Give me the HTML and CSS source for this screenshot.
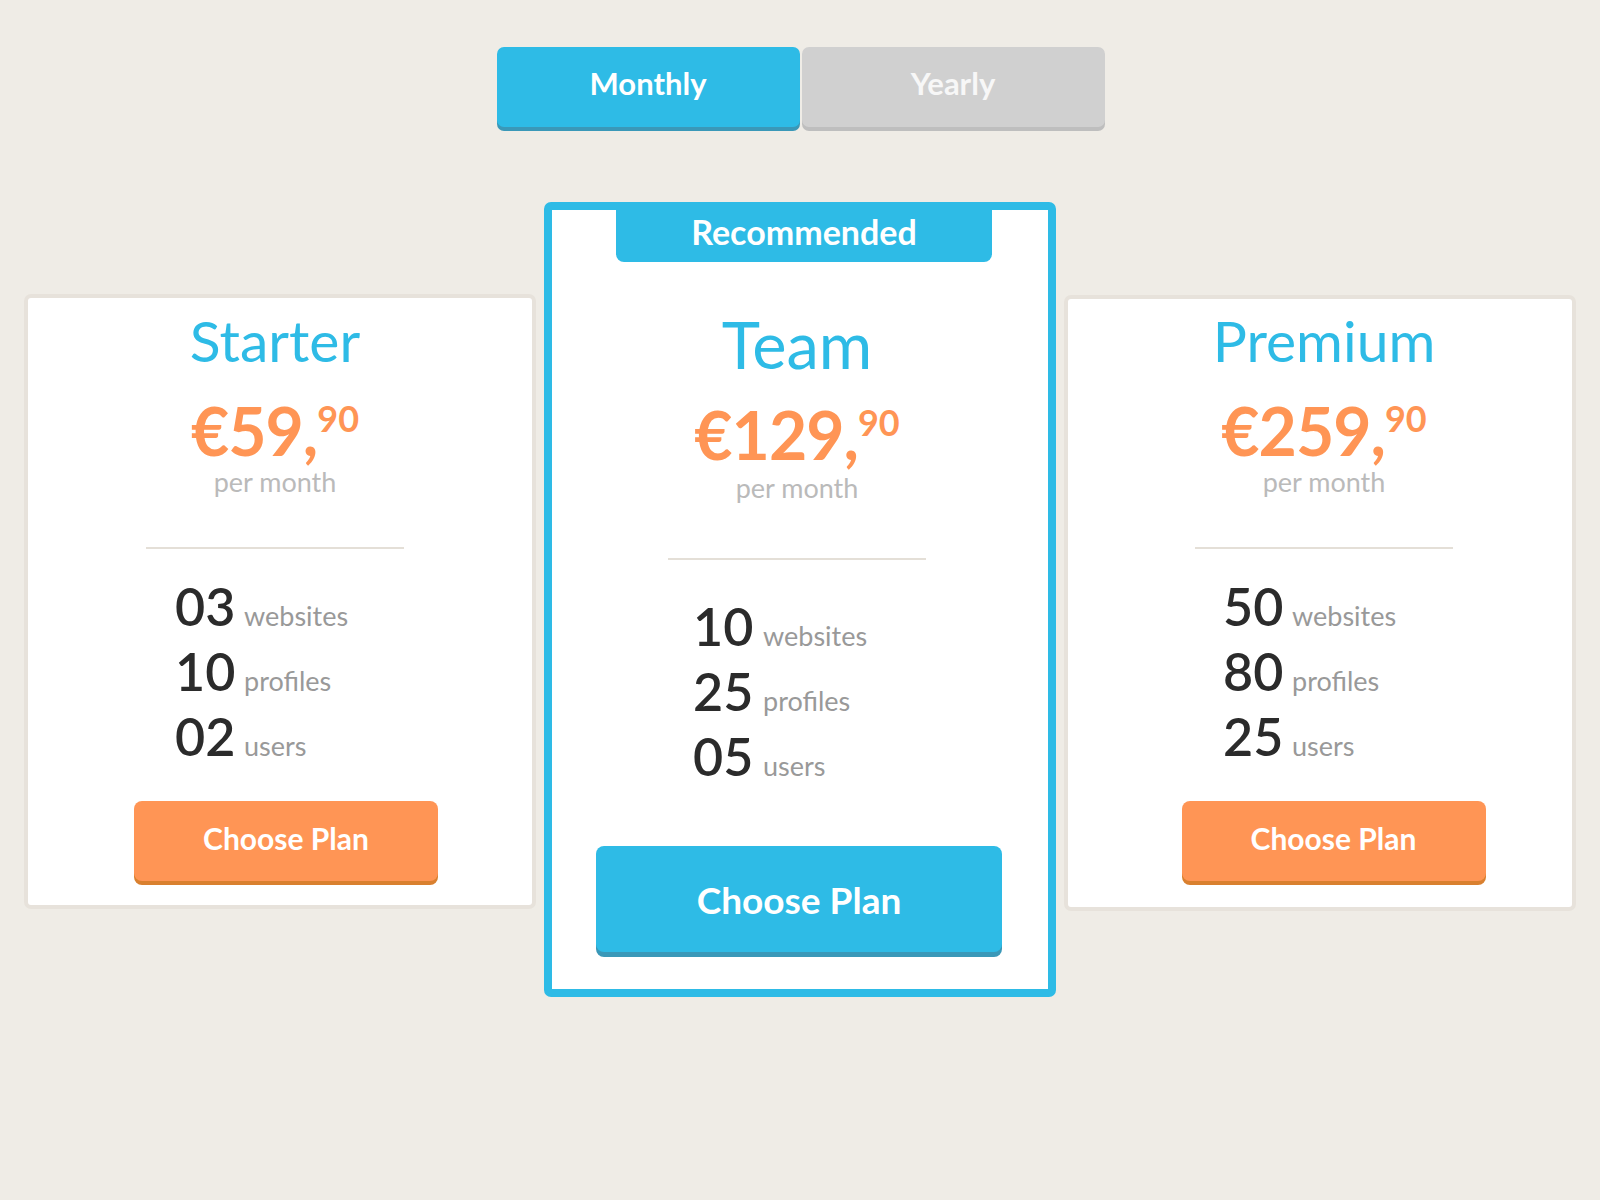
FILE: index.html
```html
<!DOCTYPE html>
<html lang="en">
<head>
<meta charset="utf-8">
<title>Pricing</title>
<link rel="stylesheet" href="styles.css">
</head>
<body>
<main class="pricing">
  <div class="toggle">
    <button class="toggle-btn is-active">Monthly</button>
    <button class="toggle-btn">Yearly</button>
  </div>

  <div class="plans">
    <section class="plan plan--starter">
      <h2 class="plan-name">Starter</h2>
      <div class="plan-price">€59,<span class="cents">90</span></div>
      <div class="plan-period">per month</div>
      <hr class="plan-divider">
      <ul class="features">
        <li class="feature"><span class="num">03</span><span class="label">websites</span></li>
        <li class="feature"><span class="num">10</span><span class="label">profiles</span></li>
        <li class="feature"><span class="num">02</span><span class="label">users</span></li>
      </ul>
      <button class="choose">Choose Plan</button>
    </section>

    <section class="plan plan--team">
      <div class="badge">Recommended</div>
      <h2 class="plan-name">Team</h2>
      <div class="plan-price">€129,<span class="cents">90</span></div>
      <div class="plan-period">per month</div>
      <hr class="plan-divider">
      <ul class="features">
        <li class="feature"><span class="num">10</span><span class="label">websites</span></li>
        <li class="feature"><span class="num">25</span><span class="label">profiles</span></li>
        <li class="feature"><span class="num">05</span><span class="label">users</span></li>
      </ul>
      <button class="choose">Choose Plan</button>
    </section>

    <section class="plan plan--premium">
      <h2 class="plan-name">Premium</h2>
      <div class="plan-price">€259,<span class="cents">90</span></div>
      <div class="plan-period">per month</div>
      <hr class="plan-divider">
      <ul class="features">
        <li class="feature"><span class="num">50</span><span class="label">websites</span></li>
        <li class="feature"><span class="num">80</span><span class="label">profiles</span></li>
        <li class="feature"><span class="num">25</span><span class="label">users</span></li>
      </ul>
      <button class="choose">Choose Plan</button>
    </section>
  </div>
</main>
</body>
</html>
```

FILE: styles.css
```css
* { box-sizing: border-box; }

html, body { margin: 0; padding: 0; }

body {
  background: #efece6;
  font-family: Lato, "Noto Sans", sans-serif;
  width: 1600px;
  min-height: 1200px;
}

.pricing { padding-top: 47px; }

/* toggle */
.toggle {
  display: flex;
  justify-content: center;
  gap: 2px;
  padding-left: 1px;
}

.toggle-btn {
  width: 303px;
  height: 80px;
  border: 0;
  border-radius: 7px;
  padding: 0 0 7px;
  display: flex;
  align-items: center;
  justify-content: center;
  font: 700 31px/1 Lato, "Noto Sans", sans-serif;
  color: #f7f7f7;
  background: #d0d0d0;
  box-shadow: 0 4px 0 #bebebe;
}

.toggle-btn.is-active {
  color: #fff;
  background: #2ebbe6;
  box-shadow: 0 4px 0 #3a98b8;
}

/* plans */
.plans {
  display: flex;
  justify-content: center;
  align-items: flex-start;
  gap: 8px;
  margin-top: 75px;
}

.plan {
  width: 512px;
  background: #fff;
  border: 4px solid #e7e2db;
  border-radius: 7px;
  display: flex;
  flex-direction: column;
  align-items: center;
  padding: 14px 0 24px;
}

.plan--starter { margin-top: 92px; padding-right: 10px; }
.plan--premium { margin-top: 93px; padding: 13px 0 26px 8px; }

.plan--team {
  border: 8px solid #2ebbe6;
  padding: 0 6px 37px 0;
}

.badge {
  align-self: flex-start;
  margin-left: 64px;
  width: 376px;
  height: 52px;
  padding-top: 5px;
  background: #2ebbe6;
  border-radius: 0 0 8px 8px;
  color: #fff;
  font: 700 34px/1 Lato, "Noto Sans", sans-serif;
  text-align: center;
}

.plan-name {
  margin: 0;
  font: 400 57px/1 Lato, "Noto Sans", sans-serif;
  color: #2ebbe6;
}

.plan--team .plan-name { font-size: 65px; margin-top: 50px; }

.plan-price {
  margin-top: 29px;
  font: 700 66px/1 Lato, "Noto Sans", sans-serif;
  letter-spacing: -1px;
  color: #ff9555;
  white-space: nowrap;
}

.plan--team .plan-price { margin-top: 25px; }

.cents {
  font-size: 36px;
  line-height: 1;
  letter-spacing: 0;
  vertical-align: 24px;
}

.plan-period {
  margin-top: 4px;
  font: 400 27px/1 Lato, "Noto Sans", sans-serif;
  color: #bababa;
}

.plan--team .plan-period { margin-top: 6px; }

.plan-divider {
  width: 258px;
  height: 2px;
  margin: 52px 0 0;
  border: 0;
  background: #e4dfd7;
}

.plan--team .plan-divider { margin-top: 57px; }

.features {
  align-self: flex-start;
  list-style: none;
  margin: 31px 0 0 147px;
  padding: 0;
}

.plan--team .features { margin: 40px 0 0 141px; }
.plan--premium .features { margin-left: 147px; }

.feature {
  display: flex;
  align-items: baseline;
  height: 65px;
}

.num {
  width: 69px;
  font: 600 52px/1 Lato, "Noto Sans", sans-serif;
  color: #2b2b2b;
}

.plan--team .num { width: 70px; }

.label {
  font: 400 27px/1 Lato, "Noto Sans", sans-serif;
  color: #999;
}

.choose {
  margin: 26px 0 0 22px;
  width: 304px;
  height: 80px;
  border: 0;
  border-radius: 8px;
  padding: 0 0 6px;
  display: flex;
  align-items: center;
  justify-content: center;
  font: 700 30px/1 Lato, "Noto Sans", sans-serif;
  color: #fff;
  background: #ff9555;
  box-shadow: 0 4px 0 #d9802f;
}

.plan--premium .choose { margin-left: 19px; }

.plan--team .choose {
  margin: 51px 0 0 4px;
  width: 406px;
  height: 106px;
  padding: 0;
  font-size: 37px;
  background: #2ebbe6;
  box-shadow: 0 5px 0 #3a98b8;
}
```
